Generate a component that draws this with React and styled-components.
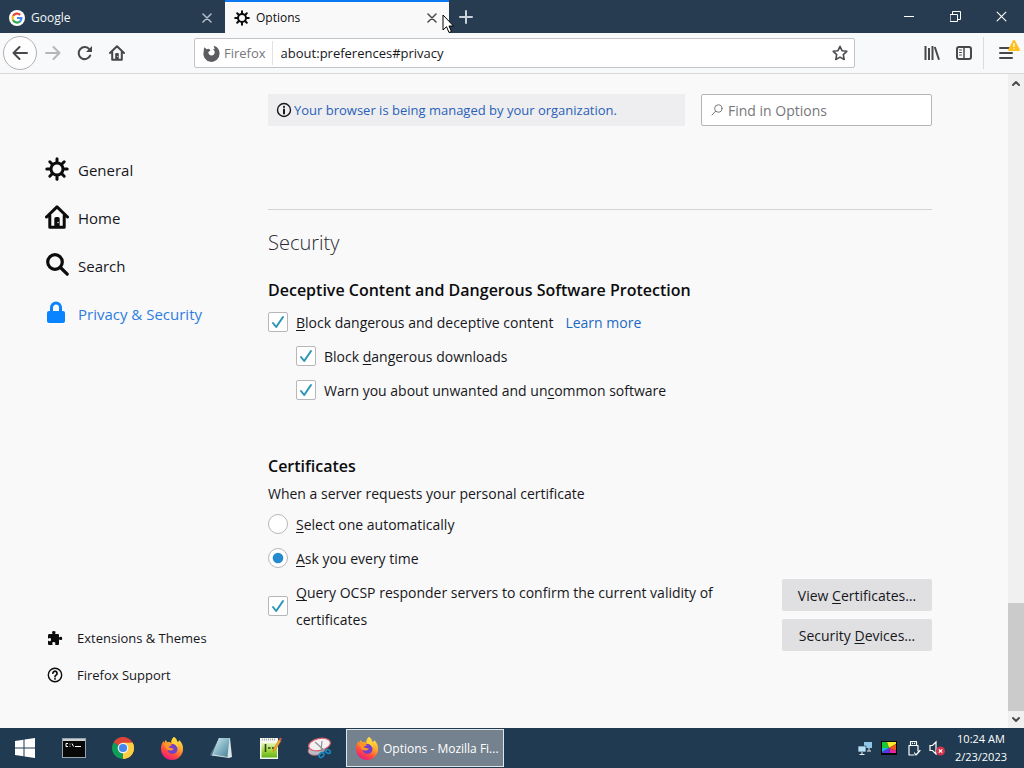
import React from "react";
import styled, { createGlobalStyle, css } from "styled-components";

const GlobalStyle = createGlobalStyle`
  * { box-sizing: border-box; }
  body {
    margin: 0;
    background: #f9f9fa;
    color: #17171b;
    font-family: "Open Sans", "Noto Sans", sans-serif;
    font-size: 14px;
  }
  button, input { font: inherit; color: inherit; }
  button { border: 0; padding: 0; background: none; }
  h1, h2, p, ul { margin: 0; padding: 0; }
  svg { display: block; flex: none; }
`;

const Desktop = styled.div`
  min-height: 100vh;
  display: flex;
  flex-direction: column;
`;

/* Tab strip */
const TabStrip = styled.header`
  display: flex;
  height: 33px;
  background: #273c50;
  color: #f4f6f8;
`;
const Tabs = styled.div`
  display: flex;
  flex: 0 1 449px;
  gap: 1px;
`;
const Tab = styled.div`
  position: relative;
  flex: 1;
  display: flex;
  align-items: center;
  padding: 0 12px 0 9px;
  border-top: 2px solid ${(p) => (p.$active ? "#0a78f0" : "transparent")};
  background: ${(p) => (p.$active ? "#f9f9fa" : "transparent")};
  color: ${(p) => (p.$active ? "#0c0c0d" : "#f4f6f8")};
`;
const TabTitle = styled.button`
  flex: 1;
  display: flex;
  align-items: center;
  gap: 6px;
  font-size: 12px;
  line-height: 16px;
  text-align: left;
`;
const TabClose = styled.button`
  color: ${(p) => (p.$active ? "#4a4a4f" : "#b3bfca")};
`;
const NewTab = styled.button`
  width: 34px;
  display: grid;
  place-items: center;
  color: #c9d1d9;
`;
const WindowControls = styled.div`
  display: flex;
  margin-left: auto;
`;
const WindowButton = styled.button`
  width: 46px;
  display: grid;
  place-items: center;
  color: #fff;
`;
const Pointer = styled.svg`
  position: absolute;
  right: -5px;
  top: 12px;
  z-index: 2;
`;

/* Navigation toolbar */
const Toolbar = styled.nav`
  display: flex;
  align-items: center;
  height: 41px;
  padding-left: 2px;
  background: #f8f9fa;
  border-bottom: 1px solid #d9d9dc;
`;
const ToolButton = styled.button`
  width: 32px;
  height: 32px;
  display: grid;
  place-items: center;
  color: ${(p) => (p.$dim ? "#b6b6b9" : "#48484c")};
`;
const BackButton = styled(ToolButton)`
  width: 34px;
  height: 34px;
  border: 1px solid #b1b1b5;
  border-radius: 50%;
  background: #fdfdfd;
  margin-left: 1px;
`;
const AddressBar = styled.div`
  flex: 1;
  display: flex;
  align-items: center;
  height: 30px;
  margin: 0 61px;
  padding: 0 6px 0 8px;
  background: #fff;
  border: 1px solid #c4c4c7;
  border-radius: 2px;
`;
const Identity = styled.button`
  display: flex;
  align-items: center;
  gap: 4px;
  height: 24px;
  padding-right: 6px;
  border-right: 1px solid #e2e2e5;
  font-size: 13px;
  color: #77777b;
`;
const AddressInput = styled.input`
  flex: 1;
  min-width: 0;
  padding: 0 8px;
  border: 0;
  outline: 0;
  background: none;
  font-size: 13px;
`;
const StarButton = styled.button`
  color: #4d4d51;
`;
const ToolDivider = styled.span`
  width: 1px;
  height: 32px;
  margin: 0 8px 0 3px;
  background: #dcdce0;
`;

/* Preferences page */
const Page = styled.div`
  flex: 1;
  display: flex;
`;
const Sidebar = styled.aside`
  flex: none;
  width: 268px;
  display: flex;
  flex-direction: column;
  justify-content: space-between;
  padding: 72px 0 35px 45px;
`;
const NavList = styled.ul`
  list-style: none;
`;
const NavLink = styled.a`
  display: flex;
  align-items: center;
  height: ${(p) => (p.$small ? 37 : 48)}px;
  gap: ${(p) => (p.$small ? 14 : 9)}px;
  padding-left: ${(p) => (p.$small ? 2 : 0)}px;
  font-size: ${(p) => (p.$small ? 13 : 15)}px;
  text-decoration: none;
  color: ${(p) => (p.$active ? "#2d7de0" : "#17171b")};
  svg {
    margin-bottom: ${(p) => (p.$small ? 0 : 2)}px;
    color: ${(p) => (p.$active ? "#0a84ff" : "#0c0c0d")};
  }
`;
const Main = styled.main`
  flex: 0 1 664px;
  min-width: 0;
  padding: 20px 0;
`;
const TopRow = styled.div`
  display: flex;
  gap: 16px;
  height: 32px;
`;
const Notice = styled.div`
  flex: 1;
  display: flex;
  align-items: center;
  gap: 2px;
  padding: 0 8px;
  background: #eeeef0;
  font-size: 13px;
`;
const Link = styled.a`
  color: ${(p) => (p.$dark ? "#2a5fb8" : "#1b6ac0")};
  text-decoration: none;
`;
const SearchBox = styled.label`
  width: 231px;
  display: flex;
  align-items: center;
  gap: 5px;
  padding: 0 9px;
  background: #fff;
  border: 1px solid #b5b5b8;
  border-radius: 2px;
  color: #77777b;
`;
const SearchInput = styled.input`
  flex: 1;
  min-width: 0;
  padding: 0;
  border: 0;
  outline: 0;
  &::placeholder { color: #77777b; opacity: 1; }
`;
const Section = styled.section`
  margin-top: 83px;
  padding-top: 16px;
  border-top: 1px solid #d4d4d7;
`;
const SectionTitle = styled.h1`
  font-size: 20px;
  font-weight: 300;
  line-height: 34px;
  color: #2a2a2e;
`;
const Group = styled.div`
  margin-top: ${(p) => p.$gap}px;
`;
const GroupTitle = styled.h2`
  font-size: 16px;
  font-weight: 600;
  line-height: 28px;
  padding-bottom: 1px;
  color: #0c0c0d;
`;
const Description = styled.p`
  line-height: 26px;
`;
const OptionRow = styled.div`
  display: flex;
  align-items: center;
  gap: 12px;
  min-height: 34px;
  padding-left: ${(p) => (p.$nested ? 28 : 0)}px;
`;
const OptionLabel = styled.label`
  display: flex;
  align-items: center;
  gap: 8px;
  line-height: 27px;
  u { text-underline-offset: 2px; text-decoration-thickness: 1px; }
`;
const ControlStack = styled.span`
  display: grid;
  flex: none;
  place-items: center;
  > * { grid-area: 1 / 1; }
  > svg { pointer-events: none; visibility: hidden; }
  > input:checked + svg { visibility: visible; }
`;
const controlBase = css`
  appearance: none;
  width: 20px;
  height: 20px;
  margin: 0;
  border: 1px solid #b7b7ba;
  background: #fff;
`;
const CheckInput = styled.input`
  ${controlBase}
  border-radius: 2px;
`;
const RadioInput = styled.input`
  ${controlBase}
  border-radius: 50%;
`;
const Split = styled.div`
  display: flex;
  justify-content: space-between;
  align-items: flex-start;
  gap: 32px;
  padding-top: 4px;
`;
const ButtonColumn = styled.div`
  flex: none;
  width: 150px;
  display: grid;
  gap: 8px;
`;
const ActionButton = styled.button`
  height: 32px;
  background: #e0e0e2;
  border-radius: 2px;
  u { text-underline-offset: 2px; text-decoration-thickness: 1px; }
`;

/* Scroll bar */
const ScrollBar = styled.div`
  flex: none;
  width: 16px;
  margin-left: auto;
  display: flex;
  flex-direction: column;
  background: #f0f0f0;
  color: #4c4c4c;
`;
const ScrollArrow = styled.button`
  height: 17px;
  display: grid;
  place-items: center;
`;
const ScrollThumb = styled.div`
  height: 108px;
  margin-top: auto;
  background: #cbcbcc;
`;

/* Taskbar */
const Taskbar = styled.footer`
  display: flex;
  height: 40px;
  background: #203b51;
  color: #fff;
`;
const TaskButton = styled.button`
  width: 49px;
  display: grid;
  place-items: center;
`;
const WindowTask = styled.button`
  display: flex;
  align-items: center;
  gap: 4px;
  width: 158px;
  margin: 1px 0 1px 3px;
  padding: 0 8px;
  border: 1px solid #dfe5e9;
  background: #74828f;
  color: #fff;
  font-size: 12px;
  white-space: nowrap;
`;
const Tray = styled.div`
  display: flex;
  align-items: center;
  gap: 8px;
  margin-left: auto;
  padding-right: 17px;
`;
const Clock = styled.time`
  margin-left: 2px;
  text-align: center;
  font-size: 11px;
  line-height: 18px;
`;

function Stroke({ size = 16, box = 16, w = 2, children, ...rest }) {
  return (
    <svg width={size} height={size} viewBox={`0 0 ${box} ${box}`} fill="none" stroke="currentColor"
      strokeWidth={w} strokeLinecap="round" strokeLinejoin="round" aria-hidden="true" {...rest}>
      {children}
    </svg>
  );
}

const Gear = ({ size }) => (
  <Stroke size={size} box={24} w={3}>
    <circle cx="12" cy="12" r="6" />
    {[0, 45, 90, 135, 180, 225, 270, 315].map((a) => (
      <path key={a} d="M12 5V1.800" transform={`rotate(${a} 12 12)`} />
    ))}
  </Stroke>
);
const House = ({ size }) => (
  <Stroke size={size}>
    <path d="M1 8 8 1.200 15 8M3.200 7v7.800h9.600V7" />
    <path d="M6.200 14.500V9.200c0-.7.500-1.200 1.200-1.200h1.200c.7 0 1.200.5 1.200 1.200v5.300z" fill="currentColor" stroke="none" />
    <circle cx="8.700" cy="11.600" r=".5" fill="#f9f9fa" stroke="none" />
  </Stroke>
);
const Cross = ({ size = 10, w = 1.5 }) => (
  <Stroke size={size} box={10} w={w}><path d="m1 1 8 8M9 1 1 9" /></Stroke>
);
const GoogleLogo = () => (
  <svg width="16" height="16" viewBox="0 0 16 16" fill="none" strokeWidth="2.200" aria-hidden="true">
    <circle cx="8" cy="8" r="8" fill="#fff" />
    <path d="M11.200 4.900A4.500 4.500 0 0 0 4 6" stroke="#ea4335" />
    <path d="M4 6a4.500 4.500 0 0 0 0 4" stroke="#fbbc05" />
    <path d="M4 10a4.500 4.500 0 0 0 7 1.400" stroke="#34a853" />
    <path d="M11 11.400A4.500 4.500 0 0 0 12.400 8H8" stroke="#4285f4" />
  </svg>
);
const FirefoxMono = () => (
  <svg width="17" height="17" viewBox="0 0 16 16" fill="#5c5c60" aria-hidden="true">
    <path d="M1.500 2.200 3.300 4 5.600 3.500 7 5.200 5 6.600c0 2 1.300 3.200 3 3.200 2 0 3-1.400 3-3 0-1.200-.8-2-1.800-2.300.7-.5 1.400-.5 1.900-.3L10 .7C13.500 1.600 15.700 4.500 15.600 8.200A7.600 7.600 0 1 1 .7 6.200C.7 4.600.8 3.300 1.500 2.200z" />
  </svg>
);
const FirefoxLogo = () => (
  <svg width="24" height="24" viewBox="0 0 24 24" aria-hidden="true">
    <defs>
      <linearGradient id="fox" x1=".8" y1="0" x2=".25" y2="1">
        <stop offset="0" stopColor="#fff04c" /><stop offset=".4" stopColor="#ffa12b" />
        <stop offset=".7" stopColor="#ff493f" /><stop offset="1" stopColor="#e9148a" />
      </linearGradient>
    </defs>
    <path d="M14 1c2 1 3 3 3.300 4.800C18.500 6 19 5 19 4c3 2.500 4.200 5.500 4 9a11 11 0 0 1-22 0c-.3-3 1-6 2.500-8l.7 2 1.300-3 2 2.300c1.500-.5 3 0 3.900.7C11 5 12 2.500 14 1z" fill="url(#fox)" />
    <circle cx="12.500" cy="13" r="5" fill="#7340c9" />
    <path d="M4 7.500C7 6 10 7 12 9.500c-1.500.1-3 .7-3.500 2 2.500-.4 3.200 1.500 5.500.7-1 2.400-4 3-6.500 1.500C6.500 13 5.500 11 4 7.500z" fill="#ff9527" />
    <path d="M14 1c2.500 2.300 4.700 6 3.500 11C16.500 8 12.500 8 11.500 6c.1-2 1-4 2.500-5z" fill="#ffd43a" />
  </svg>
);
const ChromeLogo = () => (
  <svg width="24" height="24" viewBox="0 0 24 24" aria-hidden="true">
    <path d="M12 12 2.500 6.500a11 11 0 0 1 19 0z" fill="#dc4437" />
    <path d="M12 12 21.500 6.500A11 11 0 0 1 12 23z" fill="#ffcd42" />
    <path d="M12 12v11A11 11 0 0 1 2.500 6.500z" fill="#119d58" />
    <path d="M12 6.800h9.700A11 11 0 0 1 12 23l4.500-8.400z" fill="#ffcd42" />
    <circle cx="12" cy="12" r="5.300" fill="#f3f5f6" /><circle cx="12" cy="12" r="4.100" fill="#4687ed" />
  </svg>
);
const WindowsLogo = () => (
  <svg width="20" height="20" viewBox="0 0 20 20" fill="#fff" aria-hidden="true">
    <path d="M0 3 8.500 1.800v7.700H0zM9.500 1.600 20 0v9.500H9.500zM0 10.500h8.500v7.700L0 17zM9.500 10.500H20V20L9.500 18.400z" />
  </svg>
);
const TerminalIcon = () => (
  <svg width="24" height="20" viewBox="0 0 24 20" aria-hidden="true">
    <rect x=".5" y=".5" width="23" height="19" fill="#080808" stroke="#9aa4ac" />
    <path d="M1 1h22v2H1z" fill="#c9cfd3" />
    <path d="M6 5.500H4v3h2M8 5.700v.8M8 7.800v.8M10 5.500l1.500 3M13 8.500h6" stroke="#fff" fill="none" />
  </svg>
);
const NotepadIcon = () => (
  <svg width="24" height="24" viewBox="0 0 24 24" aria-hidden="true">
    <defs><linearGradient id="pad" x2="1" y2="1"><stop stopColor="#d4e9ee" /><stop offset=".5" stopColor="#86b6c5" /><stop offset="1" stopColor="#467f95" /></linearGradient></defs>
    <path d="M10 2 1 19l3 1.500L12 8z" fill="#557888" />
    <path d="M10 2h11l2 19-3 1L3 19.500z" fill="#dce5e7" />
    <path d="M10 2h10.500L18.500 21 4 18.500z" fill="url(#pad)" />
  </svg>
);
const NotepadPlusIcon = () => (
  <svg width="24" height="24" viewBox="0 0 24 24" aria-hidden="true">
    <defs><linearGradient id="npp" x2="0" y2="1"><stop stopColor="#e6f3bd" /><stop offset=".5" stopColor="#a8d83c" /><stop offset="1" stopColor="#5fb31c" /></linearGradient></defs>
    <path d="M2 2h18v21H2z" fill="#f6f8ee" />
    <path d="M3.500 7h15.500v14.500H3.500z" fill="url(#npp)" />
    <path d="M4 3.500h14" stroke="#a3adb3" strokeDasharray="1 1" strokeWidth="2" />
    <path d="M7.500 8v8M10 12h2.500M14 12h2" stroke="#27421d" strokeWidth="1.600" />
    <path d="m15.500 13 5.500-9.500 2 1.300-5.500 9.200-2.500 1.500z" fill="#f2a92d" stroke="#b9722a" strokeWidth=".5" />
    <path d="m21 3 1-1.500 2 1.300-1 1.700z" fill="#d84e50" />
  </svg>
);
const SnipIcon = () => (
  <svg width="24" height="24" viewBox="0 0 24 24" fill="none" aria-hidden="true">
    <ellipse cx="9.500" cy="14" rx="8.500" ry="5" transform="rotate(-12 9.500 14)" fill="#b9bec6" stroke="#c96a72" strokeWidth=".8" />
    <ellipse cx="12.500" cy="8.500" rx="11" ry="6" transform="rotate(-12 12.500 8.500)" fill="#f5f1f2" stroke="#d5606a" strokeWidth="1.200" />
    <path d="m8 6 10 9M15 5l-1 10" stroke="#8a9299" strokeWidth="1.200" />
    <ellipse cx="14.500" cy="19" rx="2.800" ry="2" transform="rotate(-45 14.500 19)" stroke="#1988c2" strokeWidth="1.600" />
    <ellipse cx="21" cy="15.500" rx="2.500" ry="1.700" transform="rotate(25 21 15.500)" stroke="#1988c2" strokeWidth="1.600" />
  </svg>
);
const Puzzle = () => (
  <svg width="16" height="16" viewBox="0 0 16 16" fill="currentColor" aria-hidden="true">
    <path d="M1 5.500c0-.8.500-1.500 1.400-1.500H5c.5 0 .6-.4.300-.9C4.500 1.800 5.500 1 6.800 1s2.400.8 1.500 2.100c-.3.500-.2.900.3.900h2.100c.8 0 1.300.5 1.300 1.300v1.500c0 .5.300.7.800.4 1.300-.8 2.400-.3 2.400 1.200s-1.100 2-2.400 1.300c-.5-.3-.8-.1-.8.4v3.600c0 .8-.5 1.300-1.300 1.300H8.500c-.5 0-.7-.4-.4-.9.7-1.200 0-2-1.300-2s-2 .8-1.300 2c.3.500.1.900-.4.900H2.400c-.9 0-1.400-.5-1.400-1.300v-2.400c0-.5.3-.6.900-.3 1.200.6 2.100 0 2.100-1.300s-.9-2-2.100-1.300c-.6.300-.9.100-.9-.4z" />
  </svg>
);

const NAV = [
  { label: "General", href: "#general", icon: <Gear size={24} /> },
  { label: "Home", href: "#home", icon: <House size={24} /> },
  { label: "Search", href: "#search", icon: <Stroke size={24} box={24} w={3.2}><circle cx="10" cy="9" r="7.300" /><path d="m15.500 14.500 6.700 6.700" /></Stroke> },
  {
    label: "Privacy & Security", href: "#privacy", active: true,
    icon: (
      <svg width="24" height="24" viewBox="0 0 24 24" aria-hidden="true">
        <path d="M6.500 11V6.500a4.500 4.500 0 0 1 9 0V11" fill="none" stroke="currentColor" strokeWidth="3" />
        <rect x="2" y="10" width="18" height="12" rx="2" fill="currentColor" />
      </svg>
    ),
  },
];

const APPS = [
  ["Start", <WindowsLogo />], ["Command Prompt", <TerminalIcon />], ["Chrome", <ChromeLogo />],
  ["Firefox", <FirefoxLogo />], ["Notepad", <NotepadIcon />], ["Notepad++", <NotepadPlusIcon />],
  ["Snipping Tool", <SnipIcon />],
];

function Checkbox({ id }) {
  return (
    <ControlStack>
      <CheckInput type="checkbox" id={id} defaultChecked />
      <Stroke size={14} box={14} w={2} color="#2b95b5"><path d="m2 8 3.200 4L12 2" /></Stroke>
    </ControlStack>
  );
}
function Radio({ id, checked }) {
  return (
    <ControlStack>
      <RadioInput type="radio" name="certificate" id={id} defaultChecked={checked} />
      <svg width="12" height="12" viewBox="0 0 12 12" aria-hidden="true"><circle cx="6" cy="6" r="5.300" fill="#258bd0" /></svg>
    </ControlStack>
  );
}

export default function App() {
  return (
    <Desktop>
      <GlobalStyle />
      <TabStrip>
        <Tabs>
          <Tab>
            <TabTitle><GoogleLogo /><span>Google</span></TabTitle>
            <TabClose aria-label="Close Google tab"><Cross /></TabClose>
          </Tab>
          <Tab $active>
            <TabTitle><Gear size={16} /><span>Options</span></TabTitle>
            <TabClose $active aria-label="Close Options tab"><Cross /></TabClose>
            <Pointer width="12" height="20" viewBox="0 0 12 20" aria-hidden="true">
              <path d="M1 1v15l3.500-3.300L7 18.500l2.500-1L7 12h4.500z" fill="#fff" stroke="#000" />
            </Pointer>
          </Tab>
        </Tabs>
        <NewTab aria-label="New tab"><Stroke size={14} box={14}><path d="M7 1v12M1 7h12" /></Stroke></NewTab>
        <WindowControls>
          <WindowButton aria-label="Minimize"><Stroke size={10} box={10} w={1}><path d="M0 4.500h10" /></Stroke></WindowButton>
          <WindowButton aria-label="Restore"><Stroke size={11} box={11} w={1}><path d="M.5 3.500h7v7h-7zM2.500 3V.5h8v8H8" /></Stroke></WindowButton>
          <WindowButton aria-label="Close"><Cross size={11} w={1} /></WindowButton>
        </WindowControls>
      </TabStrip>

      <Toolbar aria-label="Navigation">
        <BackButton aria-label="Back"><Stroke><path d="M15 8H1.500M7.500 2l-6 6 6 6" /></Stroke></BackButton>
        <ToolButton $dim aria-label="Forward"><Stroke><path d="M1 8h13.500M8.500 2l6 6-6 6" /></Stroke></ToolButton>
        <ToolButton aria-label="Reload"><Stroke><path d="M13.200 10.500A6 6 0 1 1 12.500 4.500" /><path d="M15 1v6H9z" fill="currentColor" stroke="none" /></Stroke></ToolButton>
        <ToolButton aria-label="Home"><House size={16} /></ToolButton>
        <AddressBar>
          <Identity><FirefoxMono />Firefox</Identity>
          <AddressInput aria-label="Address" defaultValue="about:preferences#privacy" />
          <StarButton aria-label="Bookmark this page">
            <Stroke w={1.6}><path d="m8 1.300 2 4.400 4.800.6-3.500 3.300.9 4.900L8 12.100l-4.200 2.400.9-4.900L1.200 6.300 6 5.700z" /></Stroke>
          </StarButton>
        </AddressBar>
        <ToolButton aria-label="Library"><Stroke strokeLinecap="butt"><path d="M1.500 1v14M5 3v12M8.500 1v14M10.800 2 15 14.800" /></Stroke></ToolButton>
        <ToolButton aria-label="Sidebars"><Stroke><rect x="1" y="2" width="14" height="12" rx="2" /><path d="M8 2v12" strokeWidth="1.500" /><path d="M3.500 5h2M3.500 7.500h2M3.500 10h2" strokeWidth="1" /></Stroke></ToolButton>
        <ToolDivider />
        <ToolButton aria-label="Menu">
          <svg width="24" height="26" viewBox="0 0 24 26" aria-hidden="true">
            <path d="M4 8h12M4 13h12M4 18h12" stroke="currentColor" strokeWidth="2" strokeLinecap="round" />
            <path d="M18 0c.7 0 1 .3 1.300.9l4.400 8.300c.5 1-.1 1.800-1.100 1.800h-9.200c-1 0-1.600-.8-1.100-1.800L16.700.9C17 .3 17.300 0 18 0z" fill="#ffbf1c" />
            <path d="M18 3v4M18 8.300v1" stroke="#fff" strokeWidth="1.300" />
          </svg>
        </ToolButton>
      </Toolbar>

      <Page>
        <Sidebar>
          <NavList>
            {NAV.map((n) => (
              <li key={n.label}><NavLink href={n.href} $active={n.active}>{n.icon}{n.label}</NavLink></li>
            ))}
          </NavList>
          <NavList>
            <li><NavLink $small href="#extensions"><Puzzle />Extensions &amp; Themes</NavLink></li>
            <li>
              <NavLink $small href="#support">
                <Stroke w={1.4}><circle cx="8" cy="8" r="6.700" /><path d="M5.900 6.200a2.100 2.100 0 1 1 3.200 1.900c-.8.500-1.100.8-1.100 1.500M8 11.700v.2" strokeWidth="1.700" /></Stroke>
                Firefox Support
              </NavLink>
            </li>
          </NavList>
        </Sidebar>

        <Main>
          <TopRow>
            <Notice>
              <Stroke w={1.4}><circle cx="8" cy="8" r="6.500" /><path d="M8 7.500v4M8 4.800v.1" strokeWidth="2" /></Stroke>
              <Link $dark href="#policies">Your browser is being managed by your organization.</Link>
            </Notice>
            <SearchBox>
              <Stroke size={12} box={12} w={1}><circle cx="7.300" cy="4.500" r="3.700" /><path d="M4.500 7.300 1 11" /></Stroke>
              <SearchInput aria-label="Find in Options" placeholder="Find in Options" />
            </SearchBox>
          </TopRow>

          <Section>
            <SectionTitle>Security</SectionTitle>
            <Group $gap={16}>
              <GroupTitle>Deceptive Content and Dangerous Software Protection</GroupTitle>
              <OptionRow>
                <OptionLabel htmlFor="block"><Checkbox id="block" /><span><u>B</u>lock dangerous and deceptive content</span></OptionLabel>
                <Link href="#learn">Learn more</Link>
              </OptionRow>
              <OptionRow $nested>
                <OptionLabel htmlFor="downloads"><Checkbox id="downloads" /><span>Block <u>d</u>angerous downloads</span></OptionLabel>
              </OptionRow>
              <OptionRow $nested>
                <OptionLabel htmlFor="unwanted"><Checkbox id="unwanted" /><span>Warn you about unwanted and un<u>c</u>ommon software</span></OptionLabel>
              </OptionRow>
            </Group>
            <Group $gap={45}>
              <GroupTitle>Certificates</GroupTitle>
              <Description>When a server requests your personal certificate</Description>
              <OptionRow>
                <OptionLabel htmlFor="auto"><Radio id="auto" /><span><u>S</u>elect one automatically</span></OptionLabel>
              </OptionRow>
              <OptionRow>
                <OptionLabel htmlFor="ask"><Radio id="ask" checked /><span><u>A</u>sk you every time</span></OptionLabel>
              </OptionRow>
              <Split>
                <OptionLabel htmlFor="ocsp">
                  <Checkbox id="ocsp" />
                  <span><u>Q</u>uery OCSP responder servers to confirm the current validity of certificates</span>
                </OptionLabel>
                <ButtonColumn>
                  <ActionButton>View <u>C</u>ertificates…</ActionButton>
                  <ActionButton>Security <u>D</u>evices…</ActionButton>
                </ButtonColumn>
              </Split>
            </Group>
          </Section>
        </Main>

        <ScrollBar>
          <ScrollArrow aria-label="Scroll up"><Stroke size={8} box={8}><path d="m1 6 3-3 3 3" /></Stroke></ScrollArrow>
          <ScrollThumb />
          <ScrollArrow aria-label="Scroll down"><Stroke size={8} box={8}><path d="m1 2 3 3 3-3" /></Stroke></ScrollArrow>
        </ScrollBar>
      </Page>

      <Taskbar>
        {APPS.map(([name, icon]) => <TaskButton key={name} aria-label={name}>{icon}</TaskButton>)}
        <WindowTask><FirefoxLogo />Options - Mozilla Fi...</WindowTask>
        <Tray>
          <svg width="16" height="16" viewBox="0 0 16 16" aria-hidden="true">
            <path d="M7 2h8v6H7z" fill="#8fc6e8" /><path d="M1 6h8v6H1z" fill="#b9dff4" stroke="#203b51" strokeWidth=".7" />
            <path d="M5 12v2M2.500 14.500h5M12 8v2.500M10 11h4" stroke="#e9f2f7" />
          </svg>
          <svg width="16" height="16" viewBox="0 0 16 16" aria-hidden="true">
            <path d="M0 1h16v14H0z" fill="#080808" /><path d="M8 8 1 8V2h5z" fill="#18c837" /><path d="M8 8 6 2h9v2z" fill="#f6ea2a" />
            <path d="m8 8 7-4v7z" fill="#f45720" /><path d="m8 8 7 3v2H9z" fill="#e526a0" /><path d="m8 8 1 5H1v-1z" fill="#5935e7" /><path d="M8 8 1 12V8z" fill="#1ab2ec" />
          </svg>
          <Stroke w={1.2}><path d="M5.500 5V1.500h6V5M4 5.500h9V11M4 5.500V15h5M7.500 3.200v.2M9.500 3.200v.2M9.500 13l1.500 2 4-4.500" /></Stroke>
          <svg width="16" height="16" viewBox="0 0 16 16" aria-hidden="true">
            <path d="M1 5.500h2.500L7 2v12l-3.500-3.500H1z" fill="none" stroke="#fff" strokeWidth="1.200" />
            <circle cx="11.500" cy="11" r="4.500" fill="#d3344b" /><path d="m9.800 9.300 3.400 3.400M13.200 9.300l-3.400 3.400" stroke="#fff" strokeWidth="1.200" />
          </svg>
          <Clock>10:24 AM<br />2/23/2023</Clock>
        </Tray>
      </Taskbar>
    </Desktop>
  );
}
